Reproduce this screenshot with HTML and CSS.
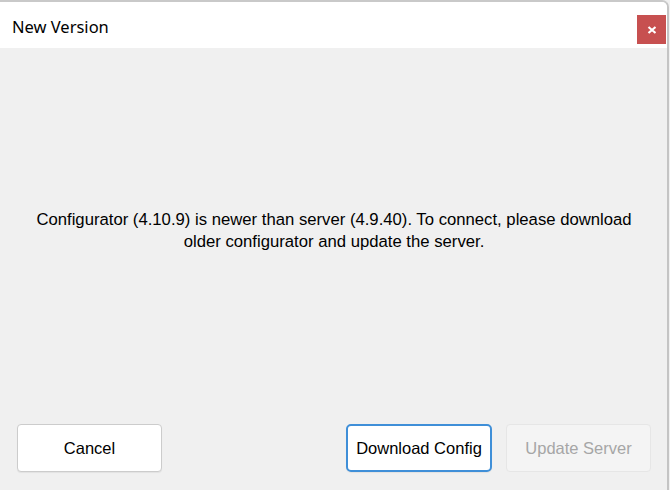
FILE: index.html
```html
<!DOCTYPE html>
<html>
<head>
<meta charset="utf-8">
<link rel="stylesheet" href="styles.css">
</head>
<body>
<div class="window">
  <div class="titlebar">
    <span class="title">New Version</span>
    <button class="close" aria-label="Close">
      <svg width="10" height="8" viewBox="0 0 10 8"><path d="M1.5 1 L8.5 7 M8.5 1 L1.5 7" stroke="#fff" stroke-width="2.2" fill="none"/></svg>
    </button>
  </div>
  <div class="content">
    <div class="message">
      <p>Configurator (4.10.9) is newer than server (4.9.40). To connect, please download older configurator and update the server.</p>
    </div>
    <div class="actions">
      <button class="btn">Cancel</button>
      <div class="spacer"></div>
      <button class="btn btn-primary">Download Config</button>
      <button class="btn btn-disabled" disabled>Update Server</button>
    </div>
  </div>
</div>
</body>
</html>
```
FILE: styles.css
```css
html, body {
  margin: 0;
  padding: 0;
  width: 670px;
  height: 490px;
  overflow: hidden;
  background: #f0f0f0;
}
.window {
  width: 667px;
  height: 488px;
  border-top: 2px solid #c9c9c9;
  border-right: 2px solid #c4c4c4;
  border-top-right-radius: 7px;
  display: flex;
  flex-direction: column;
  background: #f0f0f0;
  overflow: hidden;
}
.titlebar {
  height: 46px;
  background: #ffffff;
  display: flex;
  align-items: center;
  justify-content: space-between;
  padding-left: 12px;
}
.title {
  font-family: "Noto Sans", "Open Sans", sans-serif;
  font-size: 16.5px;
  color: #000;
  margin-top: 3px;
}
.close {
  width: 29px;
  height: 29px;
  margin-top: 9px;
  margin-right: 1px;
  border: none;
  background: #c75050;
  padding: 0;
  display: flex;
  align-items: center;
  justify-content: center;
}
.close svg {
  display: block;
  margin-top: 1px;
}
.content {
  flex: 1;
  display: flex;
  flex-direction: column;
  padding: 0 16px 18px 17px;
}
.message {
  flex: 1;
  display: flex;
  align-items: center;
  justify-content: center;
  padding-bottom: 10px;
}
.message p {
  margin: 0;
  width: 620px;
  text-align: center;
  font-family: "Liberation Sans", Arial, sans-serif;
  font-size: 16.7px;
  line-height: 22px;
  color: #000;
}
.actions {
  display: flex;
  align-items: center;
  gap: 14px;
}
.spacer {
  flex: 1;
}
.btn {
  width: 145px;
  height: 48px;
  box-sizing: border-box;
  border: 1px solid #cccccc;
  border-radius: 4px;
  background: #ffffff;
  font-family: "Liberation Sans", Arial, sans-serif;
  font-size: 16.5px;
  color: #000;
  padding: 0;
  box-shadow: 0 1px 1px rgba(0,0,0,0.06);
}
.btn-primary {
  width: 146px;
  border: 2px solid #3f8fd8;
  border-radius: 5px;
}
.btn-disabled {
  background: #f4f4f4;
  border: 1px solid #e6e6e6;
  color: #a6a6a6;
  box-shadow: none;
}
```
